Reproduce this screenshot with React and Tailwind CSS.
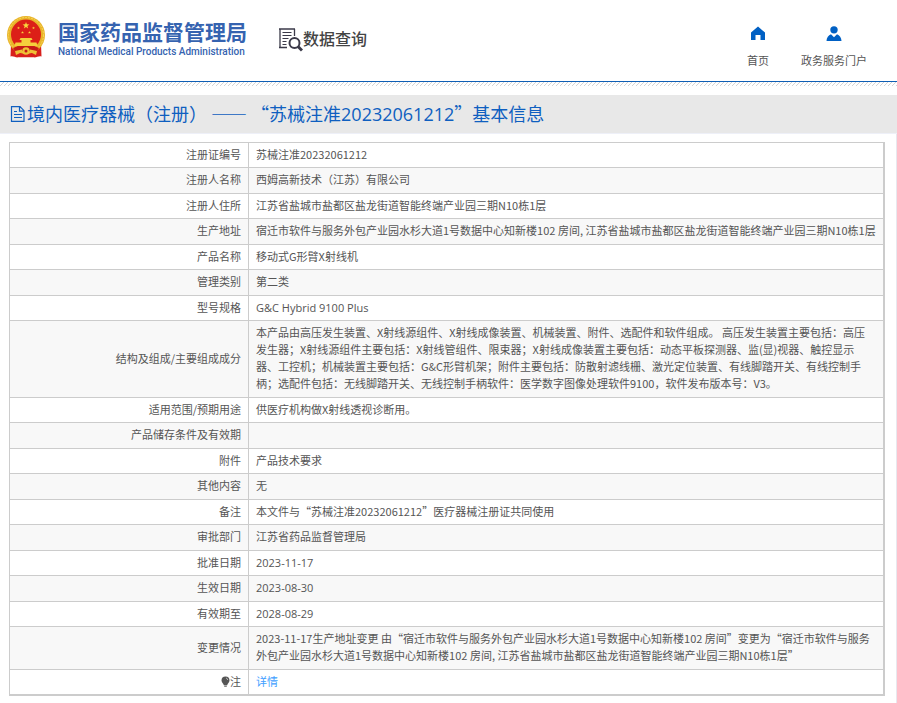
import React from "react";

const rows = [
  { label: "注册证编号", value: "苏械注准20232061212" },
  { label: "注册人名称", value: "西姆高新技术（江苏）有限公司" },
  { label: "注册人住所", value: "江苏省盐城市盐都区盐龙街道智能终端产业园三期N10栋1层" },
  {
    label: "生产地址",
    value:
      "宿迁市软件与服务外包产业园水杉大道1号数据中心知新楼102 房间, 江苏省盐城市盐都区盐龙街道智能终端产业园三期N10栋1层",
  },
  { label: "产品名称", value: "移动式G形臂X射线机" },
  { label: "管理类别", value: "第二类" },
  { label: "型号规格", value: "G&C Hybrid 9100 Plus", latin: true },
  {
    label: "结构及组成/主要组成成分",
    value:
      "本产品由高压发生装置、X射线源组件、X射线成像装置、机械装置、附件、选配件和软件组成。 高压发生装置主要包括：高压发生器；X射线源组件主要包括：X射线管组件、限束器；X射线成像装置主要包括：动态平板探测器、监(显)视器、触控显示器、工控机；机械装置主要包括：G&C形臂机架；附件主要包括：防散射滤线栅、激光定位装置、有线脚踏开关、有线控制手柄；选配件包括：无线脚踏开关、无线控制手柄软件：医学数字图像处理软件9100，软件发布版本号：V3。",
  },
  { label: "适用范围/预期用途", value: "供医疗机构做X射线透视诊断用。" },
  { label: "产品储存条件及有效期", value: "" },
  { label: "附件", value: "产品技术要求" },
  { label: "其他内容", value: "无" },
  { label: "备注", value: "本文件与“苏械注准20232061212”医疗器械注册证共同使用" },
  { label: "审批部门", value: "江苏省药品监督管理局" },
  { label: "批准日期", value: "2023-11-17", latin: true },
  { label: "生效日期", value: "2023-08-30", latin: true },
  { label: "有效期至", value: "2028-08-29", latin: true },
  {
    label: "变更情况",
    value:
      "2023-11-17生产地址变更 由“宿迁市软件与服务外包产业园水杉大道1号数据中心知新楼102 房间”变更为“宿迁市软件与服务外包产业园水杉大道1号数据中心知新楼102 房间, 江苏省盐城市盐都区盐龙街道智能终端产业园三期N10栋1层”",
  },
];

const Star = ({ x, y, r }) => (
  <path
    transform={`translate(${x} ${y}) scale(${r})`}
    fill="#f8d73c"
    d="M0-1L.24-.32.95-.31.38.12.59.81 0 .4-.59.81-.38.12-.95-.31-.24-.32z"
  />
);

const Emblem = () => (
  <svg className="h-11 w-10 shrink-0" viewBox="0 0 40 44" aria-hidden="true">
    <path d="M5 29l-.5 12.500c3-1 5 1.500 8 .8h15c3 .7 5-1.800 8-.8L35 29z" fill="#d8201c" />
    <circle cx="20" cy="20" r="19" fill="#e9b429" />
    <circle cx="20" cy="20" r="17.500" fill="none" stroke="#f7d75a" strokeWidth="1" strokeDasharray="2 1" />
    <circle cx="20" cy="19.500" r="15" fill="#dc1f18" />
    <Star x={20} y={10.5} r={3.6} />
    <Star x={12.5} y={13} r={1.5} />
    <Star x={27.5} y={13} r={1.5} />
    <Star x={16.5} y={17.5} r={1.5} />
    <Star x={23.5} y={17.5} r={1.5} />
    <path d="M14.500 23h11l1 2h-13zM15.500 25h9v2.500h-9zM9.500 27.500h21l1 3.500h-23z" fill="#f5cf3c" />
    <path d="M7 33c4-2 8-2 13-2s9 0 13 2l-2 3H9z" fill="#c41a17" />
    <circle cx="20" cy="36" r="3.800" fill="#efc036" />
    <circle cx="20" cy="36" r="1.500" fill="#c41a17" />
    <path d="M9 36l7-1.500v2.500l-6 3zM31 36l-7-1.500v2.500l6 3z" fill="#efc036" />
  </svg>
);

const QueryIcon = () => (
  <svg className="h-6 w-6" viewBox="0 0 24 24" fill="none" stroke="#3b3a49" aria-hidden="true">
    <path d="M15.500 8V1M1 1v18.500" strokeWidth="1.300" />
    <path d="M0 1h16M0 19.500h8" strokeWidth="1.600" />
    <path d="M3.500 4.500h9M3.500 7.500h9M3.500 10.500h6M3.500 13.500h4M3.500 16.500h4" strokeWidth="1.200" />
    <circle cx="15.500" cy="15" r="5" strokeWidth="2" />
    <path d="M19 18.500l4 4" strokeWidth="3" />
  </svg>
);

const HomeIcon = () => (
  <svg className="h-4 w-4" viewBox="0 0 16 16" fill="#0060c4" aria-hidden="true">
    <path d="M8 .5l7 6V14h-4.500V9h-5v5H1V6.500z" />
  </svg>
);

const UserIcon = () => (
  <svg className="h-4 w-4" viewBox="0 0 16 16" fill="#0060c4" aria-hidden="true">
    <ellipse cx="8" cy="3.800" rx="3.700" ry="3.600" />
    <path d="M.5 15c0-3.500 2-5.500 4.500-6.800l3 3 3-3c2.500 1.300 4.500 3.300 4.500 6.800z" />
  </svg>
);

const DocIcon = () => (
  <svg className="h-4 w-4" viewBox="0 0 16 16" fill="none" stroke="#0f5fc0" strokeWidth="1.200" aria-hidden="true">
    <path d="M1.500.7h8.500l4 4v10.600H1.500zM9.500.7v4.500H14M4 5.500h3M4 8.500h8M4 11.500h8" />
  </svg>
);

const BulbIcon = () => (
  <svg className="h-3 w-[9px]" viewBox="0 0 9 12" aria-hidden="true">
    <path d="M4.500.5a4 4 0 0 0-4 4c0 2 2 3 2.300 4.800h3.400c.3-1.800 2.300-2.800 2.300-4.800a4 4 0 0 0-4-4z" fill="#555" />
    <path d="M3.200 10.200h2.600" stroke="#555" />
    <path d="M5 2q1.500.3 1.700 2" stroke="#ddd" strokeWidth=".7" fill="none" />
  </svg>
);

const Hatch = () => (
  <svg className="block h-1 w-full" aria-hidden="true">
    <defs>
      <pattern id="hatch" width="4" height="4" patternUnits="userSpaceOnUse">
        <path d="M0 4l4-4" stroke="#d4d4d4" strokeWidth="1" />
      </pattern>
    </defs>
    <rect width="100%" height="4" fill="url(#hatch)" />
  </svg>
);

const Header = () => (
  <header>
    <div className="flex h-[81px] justify-between pr-[30px] pl-[6px]">
      <div className="flex items-start">
        <a href="#" className="flex items-start gap-3 pt-[15px] text-[#3563b0]">
          <Emblem />
          <div className="pt-[3px] whitespace-nowrap">
            <div className="text-[21px] leading-[27px] font-bold">国家药品监督管理局</div>
            <div className="font-['Roboto',sans-serif] text-[10px] leading-[14px] font-medium">
              National Medical Products Administration
            </div>
          </div>
        </a>
        <h1 className="ml-8 flex pt-7 text-[16px] leading-5 font-medium whitespace-nowrap text-[#444]">
          <QueryIcon />
          数据查询
        </h1>
      </div>
      <nav className="flex gap-8 pt-[26px] text-[11px] leading-4 whitespace-nowrap text-[#555]">
        <a href="#" className="flex flex-col items-center gap-[10px]">
          <HomeIcon />
          首页
        </a>
        <a href="#" className="flex flex-col items-center gap-[10px]">
          <UserIcon />
          政务服务门户
        </a>
      </nav>
    </div>
    <div className="h-px bg-[#0e5fb5]" />
    <Hatch />
  </header>
);

const Row = ({ label, latin, children }) => (
  <tr className="group even:bg-[#f8f8f8]">
    <th
      scope="row"
      className="w-[239px] border border-[#ccc] px-[7px] pt-[3px] pb-1 text-right align-middle font-normal group-even:pb-[5px]"
    >
      {label}
    </th>
    <td
      className={`border border-[#ccc] px-[7px] pt-[3px] pb-1 align-middle group-even:pb-[5px] ${
        latin ? "font-['Open_Sans',sans-serif]" : ""
      }`}
    >
      {children}
    </td>
  </tr>
);

export default function App() {
  return (
    <div lang="zh-CN" className="bg-white font-['Noto_Sans_CJK_SC',sans-serif]">
      <Header />
      <main className="pt-[9px]">
        <h2 className="flex items-center gap-px border-b border-[#eef0f8] bg-[#e8e8e8] pl-[10px] text-[18px] leading-[37px] whitespace-nowrap text-[#0f5fc0]">
          <DocIcon />
          <span>
            境内医疗器械（注册） —— “苏械注准
            <span className="font-['Open_Sans',sans-serif]">20232061212</span>
            ”基本信息
          </span>
        </h2>
        <div className="border-r border-[#e8e8ee] pt-2 pr-[11px] pb-[7px] pl-[9px]">
          <div className="border-r border-b border-[#ccc]">
            <table className="w-full border-collapse text-[11px] leading-[17px] text-[#555]">
              <tbody>
                {rows.map((row) => (
                  <Row key={row.label} label={row.label} latin={row.latin}>
                    {row.value}
                  </Row>
                ))}
                <Row
                  label={
                    <span className="flex items-center justify-end">
                      <BulbIcon />注
                    </span>
                  }
                >
                  <a href="#" className="text-[#409eff]">
                    详情
                  </a>
                </Row>
              </tbody>
            </table>
          </div>
        </div>
      </main>
    </div>
  );
}
